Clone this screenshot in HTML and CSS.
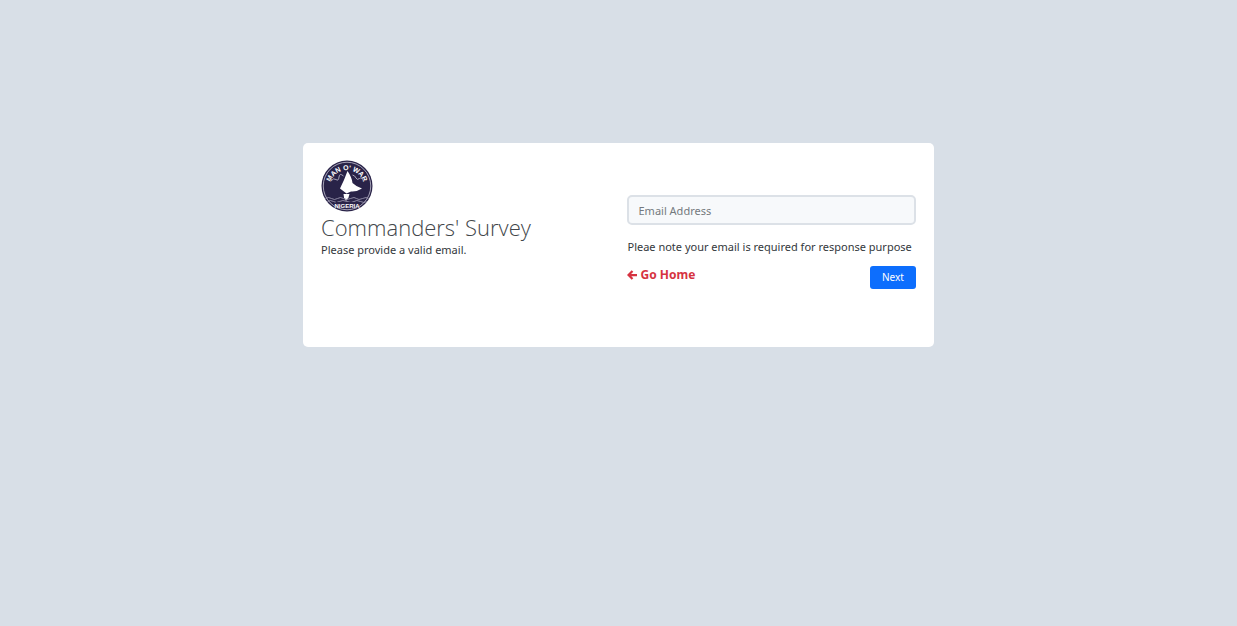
FILE: index.html
```html
<!DOCTYPE html>
<html lang="en">
<head>
<meta charset="utf-8">
<meta name="viewport" content="width=device-width, initial-scale=1">
<title>Commanders' Survey</title>
<link rel="stylesheet" href="styles.css">
</head>
<body>
<main class="card">
  <header class="intro">
    <svg class="logo" viewBox="0 0 104 104" role="img" aria-label="Man O' War Nigeria">
      <defs>
        <path id="arc" d="M18 49a34.500 34.500 0 0 1 68 0"/>
      </defs>
      <circle cx="52" cy="52" r="51" fill="#292348"/>
      <circle cx="52" cy="52" r="47.500" fill="none" stroke="#c4c2d2" stroke-width="1.600"/>
      <text class="logo-text arc-text"><textPath href="#arc" startOffset="50%" text-anchor="middle">MAN O' WAR</textPath></text>
      <path d="M20 42q5-7 10-3t6-5 9-2M63 30q5 1 7 6t7 1 8 5" fill="none" stroke="#aaa7bb" stroke-width="2"/>
      <path d="M53 22q9 13 10 24 7 7 19 11-11 7-22 6l-9 4-13-10q9-18 15-35z" fill="#fff"/>
      <path d="M45 68h12l-2 7-5 7-4-7z" fill="#fff"/>
      <path d="M9 77q6-4 12 0t12 0 12 0 14 0 12 0 12 0 12 0M13 83q6-4 12 0t12 0 15 0 14 0 13 0 12 0" fill="none" stroke="#9793ab" stroke-width="1.800"/>
      <path d="M29 84h46v11H29z" fill="#292348"/>
      <text class="logo-text" x="52" y="95" text-anchor="middle">NIGERIA</text>
    </svg>
    <h1 class="title">Commanders' Survey</h1>
    <p class="subtitle">Please provide a valid email.</p>
  </header>
  <form class="form">
    <input class="email" type="email" aria-label="Email Address" placeholder="Email Address">
    <p class="note">Pleae note your email is required for response purpose</p>
    <div class="actions">
      <a class="home" href="#">
        <svg class="arrow" viewBox="0 0 20 20" aria-hidden="true"><path d="M11 2 3 10l8 8M3 10h17" fill="none" stroke="currentColor" stroke-width="4.500"/></svg>
        Go Home
      </a>
      <button class="next" type="submit">Next</button>
    </div>
  </form>
</main>
</body>
</html>
```
FILE: styles.css
```css
* {
  box-sizing: border-box;
}

body {
  margin: 0;
  background: #d8dfe7;
  color: #33373b;
  font: 11px/18px "Noto Sans", "Open Sans", sans-serif;
}

.card {
  display: grid;
  grid-template-columns: 1fr 1fr;
  gap: 18px;
  width: 51%;
  min-width: 600px;
  margin: 143px auto 0;
  padding: 17px 18px 58px;
  background: #fff;
  border-radius: 5px;
}

.logo {
  display: block;
  width: 52px;
  height: 52px;
}

.logo-text {
  fill: #fff;
  font: bold 12px "Liberation Sans", sans-serif;
}

.arc-text {
  font-size: 14px;
}

.title {
  margin: 1px 0 0;
  color: #42464a;
  font: 300 22px/28px "Open Sans", "Noto Sans", sans-serif;
}

.subtitle,
.note {
  margin: 0;
}

.form {
  padding-top: 35px;
}

.email {
  display: block;
  width: 100%;
  height: 30px;
  padding: 0 9px;
  border: 2px solid #dce1e7;
  border-radius: 5px;
  background: #f7f9fb;
  color: inherit;
  font: inherit;
}

.email::placeholder {
  color: #74797e;
  opacity: 1;
}

.note {
  margin-top: 13px;
}

.actions {
  display: flex;
  justify-content: space-between;
  align-items: flex-start;
  margin-top: 10px;
}

.home {
  display: flex;
  align-items: center;
  gap: 3px;
  color: #d63341;
  font-size: 12px;
  font-weight: 700;
  text-decoration: none;
}

.arrow {
  width: 10px;
  height: 10px;
}

.next {
  height: 23px;
  padding: 0 12px;
  border: 0;
  border-radius: 3px;
  background: #0d6efd;
  color: #fff;
  font: 10px/23px "Noto Sans", "Open Sans", sans-serif;
}
```
